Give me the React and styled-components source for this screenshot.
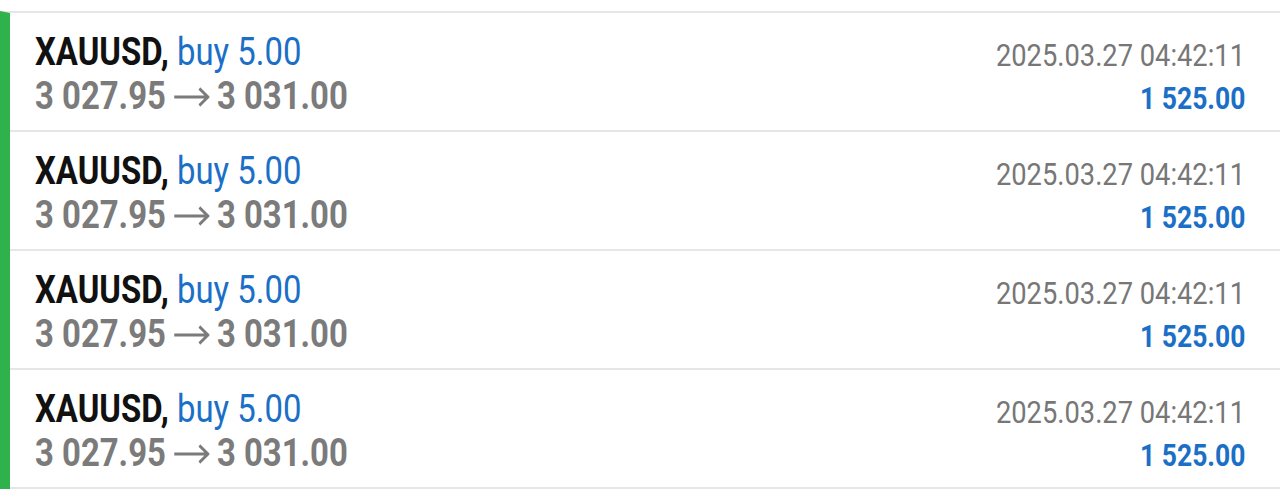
import React from 'react'
import styled, { createGlobalStyle } from 'styled-components'

const GlobalStyle = createGlobalStyle`
    html, body {
        margin: 0;
        padding: 0;
        background: #fff;
    }
    body {
        font-family: 'Roboto', 'Liberation Sans', sans-serif;
    }
`

const deals = [
    { symbol: 'XAUUSD', side: 'buy', volume: '5.00', open: '3 027.95', close: '3 031.00', time: '2025.03.27 04:42:11', profit: '1 525.00' },
    { symbol: 'XAUUSD', side: 'buy', volume: '5.00', open: '3 027.95', close: '3 031.00', time: '2025.03.27 04:42:11', profit: '1 525.00' },
    { symbol: 'XAUUSD', side: 'buy', volume: '5.00', open: '3 027.95', close: '3 031.00', time: '2025.03.27 04:42:11', profit: '1 525.00' },
    { symbol: 'XAUUSD', side: 'buy', volume: '5.00', open: '3 027.95', close: '3 031.00', time: '2025.03.27 04:42:11', profit: '1 525.00' },
]

// long thin arrow between open and close price
const Arrow = () => (
    <ArrowSvg viewBox="0 0 42 20" width="42" height="20" aria-label="→">
        <path d="M1 10 H40 M30 1.5 L40 10 L30 18.5" fill="none" stroke="currentColor" strokeWidth="3" />
    </ArrowSvg>
)

function App() {
  return (
    <Page>
        <GlobalStyle />
        <List>
            {deals.map((d, i) => (
                <Row key={i}>
                    <Left>
                        <Title>
                            <Symbol>{d.symbol},</Symbol> <Side>{d.side} {d.volume}</Side>
                        </Title>
                        <Prices>{d.open}<Arrow />{d.close}</Prices>
                    </Left>
                    <Right>
                        <Time>{d.time}</Time>
                        <Profit>{d.profit}</Profit>
                    </Right>
                </Row>
            ))}
        </List>
    </Page>
  )
}

export default App

const Page = styled.div`
    width: 1280px;
    height: 502px;
    overflow: hidden;
    background: #fff;
    padding-top: 11px;
    box-sizing: border-box;
`

const List = styled.div`
    border-top: 2px solid #e6e6e6;
    border-left: 10px solid #2fb24b;
`

const Row = styled.div`
    height: 117px;
    border-bottom: 2px solid #e6e6e6;
    display: flex;
    justify-content: space-between;
    padding: 0 35px 0 25px;
`

/* Roboto is wider than the condensed face in the picture, so squeeze it */
const Left = styled.div`
    display: flex;
    flex-direction: column;
    padding-top: 17px;
    font-size: 38px;
    line-height: 44px;
    transform: scaleX(0.865);
    transform-origin: left top;
`

const Title = styled.div`
    white-space: nowrap;
`

const Symbol = styled.span`
    color: #111;
    font-weight: 700;
`

const Side = styled.span`
    color: #1b6fc6;
`

const Prices = styled.div`
    color: #7b7b7b;
    font-weight: 700;
    white-space: nowrap;
    display: flex;
    align-items: center;
`

const ArrowSvg = styled.svg`
    display: block;
    margin: 2px 8px 0 9px;
    color: #7b7b7b;
`

const Right = styled.div`
    display: flex;
    flex-direction: column;
    align-items: flex-end;
    padding-top: 21px;
    font-size: 31px;
    line-height: 43px;
    transform: scaleX(0.88);
    transform-origin: right top;
`

const Time = styled.div`
    color: #777;
    white-space: nowrap;
`

const Profit = styled.div`
    color: #1b6fc6;
    font-weight: 700;
    transform: scaleX(0.97);
    transform-origin: right top;
`
